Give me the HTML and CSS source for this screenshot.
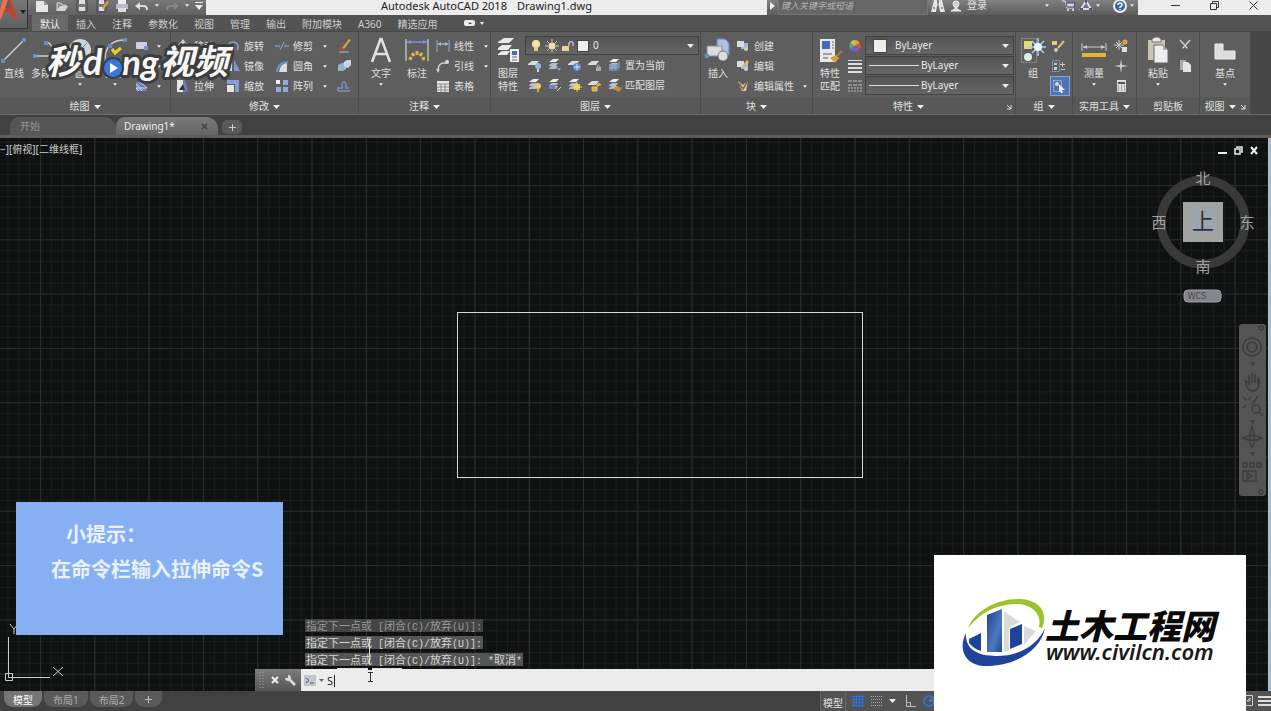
FILE: index.html
```html
<!DOCTYPE html>
<html lang="zh-CN">
<head>
    <meta charset="UTF-8">
    <meta name="viewport" content="width=device-width, initial-scale=1.0">
    <title>Autodesk AutoCAD 2018 Drawing1.dwg</title>
    <link rel="stylesheet" href="styles.css">
</head>
<body>
    <!-- Shared icons -->
    <svg class="sprite" aria-hidden="true">
        <symbol id="down" viewBox="0 0 7 4"><path d="M0 0h7L3.5 4z" fill="#eee"/></symbol>
        <symbol id="corner" viewBox="0 0 6 6"><path d="M1 1l4 4M5 1v4H1" fill="none" stroke="#ddd"/></symbol>
        <symbol id="layers" viewBox="0 0 14 14">
            <path d="M1 4l4-3h6L8 4z" fill="#eee"/><path d="M1 7l3-2h6L8 8H1zM1 10l3-2h6l-2 3H1z" fill="#b8bec8"/>
        </symbol>
        <symbol id="layer" viewBox="0 0 14 14"><path d="M0 6l4-3h7L8 7H0z" fill="#dcdcdc"/></symbol>
        <symbol id="block" viewBox="0 0 14 14">
            <path d="M5 4h7v6H5z" fill="#a9b8d6"/><path d="M1 2h7v6H1z" fill="#d9dbe0"/><circle cx="10" cy="10" r="2" fill="#ccd"/>
        </symbol>
    </svg>

    <header class="top">
        <button class="app-button" aria-label="应用程序菜单">
            <svg width="28" height="29" viewBox="0 0 28 29">
                <path d="M-4 21L5 -5h4l9 24-5-1-3-6H4l-3 7z" fill="#c5432c"/>
                <path d="M5 8L8 0l3 8z" fill="#5b5b5b"/>
                <path d="M-4 21L5 -5l3 5L1 19z" fill="#e8745a"/>
                <path d="M20 10h6l-3 4z" fill="#222"/>
            </svg>
        </button>
        <div class="top-rows">
            <div class="title-bar">
                <div class="quick-access">
                    <button aria-label="新建"><svg width="14" height="14" viewBox="0 0 14 14"><path d="M1 2h8l4 4v7H1z" fill="#e6e6e6"/><path d="M9 2v4h4z" fill="#999"/></svg></button>
                    <button aria-label="打开"><svg width="14" height="14" viewBox="0 0 14 14"><path d="M2 12V4h4l1 2h4v2H5z" fill="#8a8a8a" stroke="#ddd"/><path d="M2 12l3-5h8l-3 5z" fill="#d5d5d5"/></svg></button>
                    <button aria-label="保存"><svg width="14" height="14" viewBox="0 0 14 14"><path d="M2 1h10v12H2z" fill="#777" stroke="#445"/><path d="M4 1h6v4H4zM4 8h6v4H4z" fill="#ddd"/></svg></button>
                    <button aria-label="另存为"><svg width="14" height="14" viewBox="0 0 14 14"><path d="M2 1h9v12H2z" fill="#777" stroke="#445"/><path d="M4 1h5v4H4zM4 8h5v4H4z" fill="#ddd"/><path d="M7 9l5-7 2 1-5 7z" fill="#d9a441"/></svg></button>
                    <button aria-label="打印"><svg width="14" height="14" viewBox="0 0 14 14"><path d="M3 1h8v5H3z" fill="#eee"/><path d="M1 5h12v5H1z" fill="#b5bccb"/><path d="M3 9h8v4H3z" fill="#ddd"/></svg></button>
                    <button aria-label="放弃"><svg width="14" height="14" viewBox="0 0 14 14"><path d="M2 7h7q3 0 3 4" fill="none" stroke="#ddd" stroke-width="2"/><path d="M0 7l5-4v8z" fill="#ddd"/></svg></button>
                    <svg class="tiny"><use href="#down"/></svg>
                    <button aria-label="重做"><svg width="14" height="14" viewBox="0 0 14 14"><path d="M12 7H5q-3 0-3 4" fill="none" stroke="#888" stroke-width="2"/><path d="M14 7L9 3v8z" fill="#888"/></svg></button>
                    <svg class="tiny"><use href="#down"/></svg>
                    <button aria-label="自定义快速访问工具栏"><svg width="8" height="8" viewBox="0 0 8 8"><path d="M0 0h8v1H0zM0 3h8L4 8z" fill="#eee"/></svg></button>
                </div>
                <h1 class="title"><span>Autodesk AutoCAD 2018</span><span>Drawing1.dwg</span></h1>
                <div class="info-center">
                    <svg width="6" height="8" viewBox="0 0 6 8"><path d="M1 0v8l5-4z" fill="#eee"/></svg>
                    <input class="search" type="text" placeholder="键入关键字或短语" aria-label="搜索">
                    <button aria-label="查找"><svg width="14" height="14" viewBox="0 0 14 14"><path d="M3 1h3v6l-1 6H0l2-8zM8 1h3l1 4 2 8H9L8 7z" fill="#e5e5e5"/><path d="M6 4h2v3H6z" fill="#aaa"/><path d="M2 9h2M10 9h2" stroke="#555"/></svg></button>
                    <button class="login"><svg width="12" height="12" viewBox="0 0 12 12"><circle cx="6" cy="4" r="3" fill="#ccc" stroke="#eee"/><path d="M5 7v2l-4 2h10L7 9V7z" fill="#ddd" stroke="#eee"/></svg>登录</button>
                    <svg class="tiny login-arrow"><use href="#down"/></svg>
                    <button aria-label="购物车"><svg width="14" height="14" viewBox="0 0 14 14"><path d="M0 2h3l2 7h7" fill="none" stroke="#eee"/><path d="M4 4h9l-1 4H5z" fill="#cfd4e8" stroke="#447"/><circle cx="6" cy="11" r="1" fill="#eee"/><circle cx="11" cy="11" r="1" fill="#eee"/></svg></button>
                    <button aria-label="A360"><svg width="14" height="14" viewBox="0 0 14 14"><path d="M7 2l5 8H2z" fill="none" stroke="#dde" stroke-width="2"/><path d="M1 10h3M10 10h3M7 1v3" stroke="#557" stroke-width="2"/></svg></button>
                    <svg class="tiny"><use href="#down"/></svg>
                    <button class="help" aria-label="帮助"><svg width="14" height="14" viewBox="0 0 14 14"><circle cx="7" cy="7" r="6" fill="#3d5da8" stroke="#eee" stroke-width="2"/><path d="M5 6q0-2 2-2t2 2q0 1-2 2v1M7 10v1" fill="none" stroke="#fff" stroke-width="1.5"/></svg></button>
                    <svg class="tiny"><use href="#down"/></svg>
                </div>
                <div class="window-buttons">
                    <button aria-label="最小化"><svg width="9" height="9" viewBox="0 0 9 9"><path d="M0 4.500h9" stroke="#333"/></svg></button>
                    <button aria-label="还原"><svg width="9" height="9" viewBox="0 0 9 9"><path d="M.5 2.500h6v6h-6zM2.500 2V.5h6v6H7" fill="none" stroke="#333"/></svg></button>
                    <button aria-label="关闭"><svg width="9" height="9" viewBox="0 0 9 9"><path d="M.5 .5l8 8M8.500 .5l-8 8" stroke="#333"/></svg></button>
                </div>
            </div>
            <nav class="ribbon-tabs">
                <a class="active" href="#">默认</a>
                <a href="#">插入</a>
                <a href="#">注释</a>
                <a href="#">参数化</a>
                <a href="#">视图</a>
                <a href="#">管理</a>
                <a href="#">输出</a>
                <a href="#">附加模块</a>
                <a href="#">A360</a>
                <a href="#">精选应用</a>
                <button class="ribbon-toggle" aria-label="最小化功能区"><svg width="20" height="7" viewBox="0 0 20 7"><rect width="11" height="6" rx="2" fill="#eee"/><path d="M4 4l2-2 2 2z" fill="#555"/><path d="M16 2h4l-2 3z" fill="#eee"/></svg></button>
            </nav>
        </div>
    </header>

    <div class="ribbon">
        <section class="panel draw">
            <div class="panel-body">
                <button class="big w28"><svg width="26" height="28" viewBox="0 0 26 28"><path d="M2 25L23 4" stroke="#ccc" stroke-width="1.500"/><path d="M0 23h4v4H0zM21 2h4v4h-4z" fill="#7089c4"/></svg>直线</button>
                <button class="big w36"><svg width="26" height="28" viewBox="0 0 26 28"><path d="M2 20h14q8-4 0-13H12" fill="none" stroke="#ccc" stroke-width="1.500"/><path d="M0 18h4v4H0zM11 5h4v4h-4z" fill="#7089c4"/></svg>多段线</button>
                <button class="big w32"><svg width="26" height="28" viewBox="0 0 26 28"><circle cx="13" cy="14" r="11" fill="#d4d4d4"/><path d="M13 14l7-7" stroke="#6580bd"/></svg>圆<svg class="tiny"><use href="#down"/></svg></button>
                <button class="big w38"><svg width="26" height="28" viewBox="0 0 26 28"><path d="M3 24Q3 4 23 4" fill="none" stroke="#ccc" stroke-width="1.500"/><path d="M21 2h4v4h-4zM6 8h4v4H6zM1 22h4v4H1z" fill="#7089c4"/></svg>圆弧<svg class="tiny"><use href="#down"/></svg></button>
                <div class="stack w28">
                    <button class="tool" aria-label="矩形"><svg width="14" height="14" viewBox="0 0 14 14"><rect x="1" y="3" width="11" height="7" rx="1" fill="#cfd2da"/><path d="M9 7h4v4H9z" fill="#7d94c8"/></svg><svg class="tiny push"><use href="#down"/></svg></button>
                    <button class="tool" aria-label="椭圆"><svg width="14" height="14" viewBox="0 0 14 14"><ellipse cx="7" cy="7" rx="6" ry="4" fill="#cfd2da"/></svg><svg class="tiny push"><use href="#down"/></svg></button>
                    <button class="tool" aria-label="图案填充"><svg width="14" height="14" viewBox="0 0 14 14"><path d="M1 3h4l7 9H1z" fill="#6f8bc5"/><path d="M1 5l6 7M1 9l3 3M5 3l7 6H1" stroke="#cdd6ee" fill="none"/></svg><svg class="tiny push"><use href="#down"/></svg></button>
                </div>
            </div>
            <h2>绘图 <svg class="arrow"><use href="#down"/></svg></h2>
        </section>

        <section class="panel modify">
            <div class="panel-body">
                <div class="stack w50">
                    <button class="tool"><svg width="14" height="14" viewBox="0 0 14 14"><path d="M7 0l3 4H8v2h2V4l4 3-4 3V8H8v2h2l-3 4-3-4h2V8H4v2L0 7l4-3v2h2V4H4z" fill="#ccc"/></svg>移动</button>
                    <button class="tool"><svg width="14" height="14" viewBox="0 0 14 14"><circle cx="5" cy="5" r="3.500" fill="none" stroke="#8fa6d8" stroke-width="2"/><circle cx="9" cy="9" r="3.500" fill="none" stroke="#ddd" stroke-width="2"/></svg>复制</button>
                    <button class="tool"><svg width="14" height="14" viewBox="0 0 14 14"><path d="M1 1h8l3 12H1z" fill="#6480bb"/><path d="M1 1h6v12H1z" fill="#e5e5e5"/><path d="M3 11l4-6 2 6z" fill="#333"/></svg>拉伸</button>
                </div>
                <div class="stack w49">
                    <button class="tool"><svg width="14" height="14" viewBox="0 0 14 14"><path d="M3 11A5 5 0 1 1 11 11" fill="none" stroke="#8294bb" stroke-width="2"/><path d="M0 9h6v5z" fill="#8294bb"/></svg>旋转</button>
                    <button class="tool"><svg width="14" height="14" viewBox="0 0 14 14"><path d="M6 1v11H0z" fill="#ddd"/><path d="M8 1v11h6z" fill="#7f97ce"/></svg>镜像</button>
                    <button class="tool"><svg width="14" height="14" viewBox="0 0 14 14"><path d="M1 1h12v12H9V5H1z" fill="#879fd6"/><path d="M1 6h7v7H1z" fill="#e5e5e5"/></svg>缩放</button>
                </div>
                <div class="stack w62">
                    <button class="tool"><svg width="14" height="14" viewBox="0 0 14 14"><path d="M0 7h5M9 7h5" stroke="#8097cf" stroke-width="1.500"/><path d="M5 11l4-8" stroke="#aaa"/></svg>修剪<svg class="tiny push"><use href="#down"/></svg></button>
                    <button class="tool"><svg width="14" height="14" viewBox="0 0 14 14"><path d="M1 13Q2 2 13 2v2Q5 5 3 13z" fill="#7089c4"/><path d="M4 13Q5 5 12 4v9z" fill="#ddd"/></svg>圆角<svg class="tiny push"><use href="#down"/></svg></button>
                    <button class="tool"><svg width="14" height="14" viewBox="0 0 14 14"><path d="M1 1h4v4H1z" fill="#eee"/><path d="M8 1h5v5H8zM1 8h5v5H1zM8 8h5v5H8z" fill="#93a8d8"/></svg>阵列<svg class="tiny push"><use href="#down"/></svg></button>
                </div>
                <div class="stack">
                    <button class="tool" aria-label="删除"><svg width="14" height="14" viewBox="0 0 14 14"><path d="M5 9l7-9 2 1-7 9z" fill="#d7a347"/><path d="M1 10l3-2 4 3-3 1z" fill="#b5472f"/><path d="M2 13h10" stroke="#bbb"/></svg></button>
                    <button class="tool" aria-label="分解"><svg width="14" height="14" viewBox="0 0 14 14"><path d="M1 6l4-2h4v6l-3 2H1z" fill="#9eb0cf"/><path d="M7 3l3-2h4v5l-3 3-4-1z" fill="#cbd5e8"/></svg></button>
                    <button class="tool" aria-label="偏移"><svg width="14" height="14" viewBox="0 0 14 14"><path d="M1 12h12M3 9h2V5q2-4 4 0v4h3M1 12V9h2" fill="none" stroke="#7e92c2" stroke-width="1.500"/></svg></button>
                </div>
            </div>
            <h2>修改 <svg class="arrow"><use href="#down"/></svg></h2>
        </section>

        <section class="panel annotate">
            <div class="panel-body">
                <button class="big w36"><svg width="26" height="28" viewBox="0 0 26 28"><path d="M4 26L12.500 3h1L22 26M7 18h12" fill="none" stroke="#e2e2e2" stroke-width="2.500"/></svg>文字<svg class="tiny"><use href="#down"/></svg></button>
                <button class="big w36"><svg width="26" height="28" viewBox="0 0 26 28"><path d="M2 3v22M24 3v22" stroke="#bbb" stroke-width="1.500"/><path d="M3 6h20" stroke="#7c93cc" stroke-width="1.500"/><path d="M3 6l4-2v4zM23 6l-4-2v4z" fill="#7c93cc"/><path d="M13 15v4M8 17l2 3M18 17l-2 3M5 22l3 1M21 22l-3 1" stroke="#dfb54b" stroke-width="3"/></svg>标注</button>
                <div class="stack w54">
                    <button class="tool"><svg width="14" height="14" viewBox="0 0 14 14"><path d="M1 1v12M13 1v12" stroke="#93a7d8"/><path d="M2 5h10" stroke="#ccc"/><path d="M2 5l3-2v4zM12 5L9 3v4z" fill="#aab9df"/></svg>线性<svg class="tiny push"><use href="#down"/></svg></button>
                    <button class="tool"><svg width="14" height="14" viewBox="0 0 14 14"><path d="M2 12Q2 4 8 4h2" fill="none" stroke="#ccc" stroke-width="1.500"/><circle cx="11" cy="3" r="2" fill="#ddd"/><path d="M0 10h4l-2 4z" fill="#ccc"/></svg>引线<svg class="tiny push"><use href="#down"/></svg></button>
                    <button class="tool"><svg width="14" height="14" viewBox="0 0 14 14"><path d="M1 2h12v11H1z" fill="#e7e7e7"/><path d="M1 5h12M1 8h12M1 11h12M5 5v8M9 5v8" stroke="#888"/></svg>表格</button>
                </div>
            </div>
            <h2>注释 <svg class="arrow"><use href="#down"/></svg></h2>
        </section>

        <section class="panel layer">
            <div class="panel-body">
                <button class="big w34"><svg width="26" height="28" viewBox="0 0 26 28"><path d="M3 6l6-4h10l-5 5H3zM3 12l4-3h10l-4 5H3zM3 18l4-3h8l-3 4H3z" fill="#e8e8e8"/><path d="M15 13h9v13h-9z" fill="#eee"/><path d="M17 15h5v4h-5z" fill="#4b6dab"/><path d="M17 21h5M17 24h5" stroke="#668"/></svg><span>图层<br>特性</span></button>
                <div class="layer-tools">
                    <label class="combo">
                        <svg width="14" height="14" viewBox="0 0 14 14"><circle cx="7" cy="5" r="4" fill="#f4e6a0"/><path d="M5 8h4v4H5z" fill="#dacb85"/></svg>
                        <svg width="14" height="14" viewBox="0 0 14 14"><circle cx="7" cy="7" r="3.500" fill="#ecdcae"/><path d="M7 0v3M7 11v3M0 7h3M11 7h3M2 2l2 2M10 10l2 2M12 2l-2 2M2 12l2-2" stroke="#d4c69f"/></svg>
                        <svg width="14" height="14" viewBox="0 0 14 14"><path d="M1 7h7v5H1z" fill="#e9d391"/><path d="M8 7V4q2-3 4 0v3" fill="none" stroke="#bbb" stroke-width="1.500"/></svg>
                        <span class="swatch"></span>
                        <select aria-label="图层"><option>0</option></select>
                        <svg class="arrow"><use href="#down"/></svg>
                    </label>
                    <div class="icon-row">
                        <button class="tool" aria-label="关"><svg width="14" height="14" viewBox="0 0 14 14"><use href="#layer"/><circle cx="10" cy="8" r="3" fill="#9db4e8"/><path d="M9 11h2v3H9z" fill="#ccd"/></svg></button>
                        <button class="tool" aria-label="隔离"><svg width="14" height="14" viewBox="0 0 14 14"><use href="#layers"/><path d="M9 10l4 0-2 3z" fill="#8ba3d5"/></svg></button>
                        <button class="tool" aria-label="冻结"><svg width="14" height="14" viewBox="0 0 14 14"><use href="#layer"/><circle cx="9" cy="9" r="4" fill="#6989ce"/><path d="M9 6v6M6 9h6" stroke="#dce6ff"/></svg></button>
                        <button class="tool" aria-label="锁定"><svg width="14" height="14" viewBox="0 0 14 14"><use href="#layer"/><path d="M8 9h5v4H8z" fill="#aaa"/><path d="M9 9q1-4 3 0" fill="none" stroke="#bbb"/></svg></button>
                        <button class="tool"><svg width="14" height="14" viewBox="0 0 14 14"><use href="#layers"/><path d="M1 6h8l3-3v7l-3 3H1z" fill="#7d99cc" opacity=".7"/></svg>置为当前</button>
                    </div>
                    <div class="icon-row">
                        <button class="tool" aria-label="打开所有图层"><svg width="14" height="14" viewBox="0 0 14 14"><use href="#layers"/><circle cx="10" cy="8" r="3" fill="#edcb5e"/><path d="M9 11h2v3H9z" fill="#c9a84a"/></svg></button>
                        <button class="tool" aria-label="取消隔离"><svg width="14" height="14" viewBox="0 0 14 14"><use href="#layers"/><path d="M1 7h7l-1 4H1z" fill="#6c88c2"/><path d="M9 13l4-4" stroke="#ddd"/></svg></button>
                        <button class="tool" aria-label="解冻"><svg width="14" height="14" viewBox="0 0 14 14"><use href="#layers"/><circle cx="9" cy="9" r="3" fill="#f0df68"/><path d="M9 4v10M4 9h10M6 6l6 6M12 6l-6 6" stroke="#e8d550"/></svg></button>
                        <button class="tool" aria-label="解锁"><svg width="14" height="14" viewBox="0 0 14 14"><use href="#layer"/><path d="M4 9h5v4H4zM9 9V7q2-3 4 0" fill="#d9b33d" stroke="#e3c155"/></svg></button>
                        <button class="tool"><svg width="14" height="14" viewBox="0 0 14 14"><use href="#layers"/><path d="M5 11l4-3 5 2-3 4z" fill="#c48b40"/></svg>匹配图层</button>
                    </div>
                </div>
            </div>
            <h2>图层 <svg class="arrow"><use href="#down"/></svg></h2>
        </section>

        <section class="panel blocks">
            <div class="panel-body">
                <button class="big w34"><svg width="26" height="28" viewBox="0 0 26 28"><path d="M12 3h8l4 4v12H12z" fill="#aebfe3" stroke="#6c85bb"/><path d="M2 10h15v10H2z" fill="#dadce0" stroke="#888"/><circle cx="18" cy="20" r="5" fill="#ddd" stroke="#777"/><path d="M0 18h4v4H0z" fill="#6c8dcc"/></svg>插入</button>
                <div class="stack w73">
                    <button class="tool"><svg width="14" height="14" viewBox="0 0 14 14"><use href="#block"/></svg>创建</button>
                    <button class="tool"><svg width="14" height="14" viewBox="0 0 14 14"><use href="#block"/><path d="M6 7l5-6 2 2-5 5z" fill="#e2b850"/></svg>编辑</button>
                    <button class="tool"><svg width="14" height="14" viewBox="0 0 14 14"><path d="M2 2l5 4 5-4-2 10H6z" fill="#d1cfc8"/><path d="M3 4l4 6 5-8" fill="none" stroke="#8b6b30" stroke-width="1.500"/></svg>编辑属性<svg class="tiny push"><use href="#down"/></svg></button>
                </div>
            </div>
            <h2>块 <svg class="arrow"><use href="#down"/></svg></h2>
        </section>

        <section class="panel props">
            <div class="panel-body">
                <button class="big w34"><svg width="26" height="28" viewBox="0 0 26 28"><path d="M3 3h15v23H3z" fill="#e8e8ea"/><path d="M5 5h8v8H5z" fill="#4569b4"/><path d="M15 6h2M15 9h2M15 12h2" stroke="#668"/><path d="M6 18h9M6 22h5" stroke="#557"/><path d="M25 15l-5 5" stroke="#a97b3d" stroke-width="2"/><path d="M13 22l6-3 3 3-4 5z" fill="#d9a13b"/></svg><span>特性<br>匹配</span></button>
                <div class="stack w16">
                    <button class="tool" aria-label="对象颜色"><svg width="14" height="14" viewBox="0 0 14 14"><path d="M7 7V1a6 6 0 0 1 5 3z" fill="#e7a03d"/><path d="M7 7l5-3a6 6 0 0 1 0 6z" fill="#d9503f"/><path d="M7 7l5 3a6 6 0 0 1-5 3z" fill="#b04ba5"/><path d="M7 7v6a6 6 0 0 1-5-3z" fill="#4b6fd0"/><path d="M7 7l-5 3a6 6 0 0 1 0-6z" fill="#49a9a0"/><path d="M7 7L2 4a6 6 0 0 1 5-3z" fill="#b6cf4d"/></svg></button>
                    <button class="tool" aria-label="线宽"><svg width="14" height="14" viewBox="0 0 14 14"><path d="M0 1h14v1H0zM0 4h14v2H0zM0 8h14v2H0zM0 12h14v2H0z" fill="#ddd"/></svg></button>
                    <button class="tool" aria-label="线型"><svg width="14" height="14" viewBox="0 0 14 14"><path d="M0 2h14M0 6h14" stroke="#bbb" stroke-dasharray="4 1"/><path d="M0 9h14M0 12h14" stroke="#bbb" stroke-dasharray="2 1"/></svg></button>
                </div>
                <div class="prop-combos">
                    <label class="combo"><span class="swatch"></span><select aria-label="颜色"><option>ByLayer</option></select><svg class="arrow"><use href="#down"/></svg></label>
                    <label class="combo"><span class="line"></span><select aria-label="线宽设置"><option>ByLayer</option></select><svg class="arrow"><use href="#down"/></svg></label>
                    <label class="combo"><span class="line"></span><select aria-label="线型设置"><option>ByLayer</option></select><svg class="arrow"><use href="#down"/></svg></label>
                </div>
            </div>
            <h2>特性 <svg class="arrow"><use href="#down"/></svg><svg class="launcher"><use href="#corner"/></svg></h2>
        </section>

        <section class="panel group">
            <div class="panel-body">
                <button class="big w34"><svg width="26" height="28" viewBox="0 0 26 28"><path d="M1.500 2.500h15v24h-15z" fill="none" stroke="#999" stroke-dasharray="2 1"/><path d="M4 5h8v8H4z" fill="#e6d878"/><circle cx="8" cy="21" r="4" fill="#ddeaf0"/><path d="M18 2v18M9 11h17M12 5l12 12M24 5L12 17" stroke="#a6cdf3" stroke-width="1.500"/><circle cx="18" cy="11" r="4" fill="#e5f4ff"/></svg>组</button>
                <div class="stack w20">
                    <button class="tool" aria-label="解除编组"><svg width="14" height="14" viewBox="0 0 14 14"><path d="M1 2h5v4H1z" fill="#d9ce7d"/><circle cx="5" cy="11" r="2" fill="#ccc"/><path d="M7 9l6-7" stroke="#d8c460" stroke-width="2"/></svg></button>
                    <button class="tool" aria-label="组编辑"><svg width="14" height="14" viewBox="0 0 14 14"><path d="M1.500 1.500h7v11h-7z" fill="none" stroke="#8ea4d5" stroke-dasharray="2 1"/><path d="M3 4h3v2H3zM3 8h3v3H3zM11 3h1v5h-1zM9 5h5v1H9zM10 10h4v1h-4z" fill="#ccc"/></svg></button>
                    <button class="tool selected" aria-label="启用组选择"><svg width="14" height="14" viewBox="0 0 14 14"><path d="M1.500 1.500h8v11h-8z" fill="none" stroke="#a9c0ef" stroke-dasharray="2 1"/><circle cx="5" cy="5" r="2" fill="#e5df9f"/><path d="M7 5l6 6-3 0 1 3-2 0-1-2-1 1z" fill="#eee"/></svg></button>
                </div>
            </div>
            <h2>组 <svg class="arrow"><use href="#down"/></svg></h2>
        </section>

        <section class="panel utils">
            <div class="panel-body">
                <button class="big w38"><svg width="26" height="28" viewBox="0 0 26 28"><path d="M1 7v8M25 7v8M2 11h22" stroke="#ccc"/><path d="M2 11l4-2v4zM24 11l-4-2v4z" fill="#ccc"/><path d="M1 17h24v4H1z" fill="#e6b52c"/></svg>测量<svg class="tiny"><use href="#down"/></svg></button>
                <div class="stack">
                    <button class="tool" aria-label="快速选择"><svg width="14" height="14" viewBox="0 0 14 14"><path d="M5 1v10M0 6h10M2 3l6 6M8 3L2 9" stroke="#ccc"/><circle cx="11" cy="3" r="2.500" fill="#e4a43b"/><path d="M8 8h5v5H8z" fill="#ddd"/></svg></button>
                    <button class="tool" aria-label="点坐标"><svg width="14" height="14" viewBox="0 0 14 14"><path d="M7 0l1 6 6 1-6 1-1 6-1-6-6-1 6-1z" fill="#ccc"/></svg></button>
                    <button class="tool" aria-label="计算器"><svg width="14" height="14" viewBox="0 0 14 14"><path d="M3 1h9v12H3z" fill="#ddd"/><path d="M4 3h7v2H4z" fill="#555"/><path d="M4 7h7M4 9h7M4 11h7" stroke="#666" stroke-dasharray="1 2"/></svg></button>
                </div>
            </div>
            <h2>实用工具 <svg class="arrow"><use href="#down"/></svg></h2>
        </section>

        <section class="panel clip">
            <div class="panel-body">
                <button class="big w38"><svg width="26" height="28" viewBox="0 0 26 28"><path d="M3 4h17v20H3z" fill="#cbc4b5"/><path d="M7 3q5-4 9 0v3H7z" fill="#e7e7e7" stroke="#777"/><path d="M9 9h9l5 5v13H9z" fill="#eee" stroke="#666"/><path d="M18 9v5h5z" fill="#aaa"/></svg>粘贴<svg class="tiny"><use href="#down"/></svg></button>
                <div class="stack">
                    <button class="tool" aria-label="剪切"><svg width="14" height="14" viewBox="0 0 14 14"><path d="M2 1l8 9M12 1l-8 9" stroke="#ccc" stroke-width="1.500"/><circle cx="3" cy="11" r="2" fill="none" stroke="#555"/><circle cx="11" cy="11" r="2" fill="none" stroke="#555"/></svg></button>
                    <button class="tool" aria-label="复制剪裁"><svg width="14" height="14" viewBox="0 0 14 14"><path d="M2 1h6v10H2z" fill="#aaa"/><path d="M5 3h5l3 3v7H5z" fill="#e4e4e4"/></svg></button>
                </div>
            </div>
            <h2>剪贴板</h2>
        </section>

        <section class="panel view">
            <div class="panel-body">
                <button class="big w46"><svg width="26" height="28" viewBox="0 0 26 28"><path d="M3 8h8v7h12v8H3z" fill="#ddd" stroke="#eee"/></svg>基点<svg class="tiny"><use href="#down"/></svg></button>
            </div>
            <h2>视图 <svg class="arrow"><use href="#down"/></svg><svg class="launcher"><use href="#corner"/></svg></h2>
        </section>

        <svg class="video-logo" width="195" height="56" viewBox="0 0 195 56" role="img" aria-label="秒dong视频">
            <g class="video-text">
                <text x="7" y="37" font-size="34">秒</text>
                <text class="latin" x="44" y="38" font-size="36">d</text>
                <text class="latin" x="83" y="38" font-size="35">ng</text>
                <text x="121" y="37" font-size="34">视频</text>
            </g>
            <circle cx="74" cy="31" r="11" fill="#3d3d3d"/>
            <circle cx="74" cy="31" r="9" fill="#3978dc"/>
            <path d="M71 26v10l8-5z" fill="#fff"/>
            <path d="M73 12l3 4 6-5" fill="none" stroke="#e8cd32" stroke-width="3"/>
        </svg>
    </div>

    <nav class="file-tabs">
        <a class="file-tab" href="#">开始</a>
        <a class="file-tab current" href="#">Drawing1*<svg width="7" height="7" viewBox="0 0 7 7"><path d="M1 1l5 5M6 1L1 6" stroke="#444" stroke-width="1.500"/></svg></a>
        <button class="new-tab" aria-label="新图形"><svg width="7" height="7" viewBox="0 0 7 7"><path d="M3 0h1v3h3v1H4v3H3V4H0V3h3z" fill="#ccc"/></svg></button>
    </nav>

    <main class="canvas">
        <svg class="drawing" width="100%" height="100%">
            <defs>
                <pattern id="minor" x="40" y="47" width="10.860" height="10.860" patternUnits="userSpaceOnUse">
                    <path d="M.5 0v10.860M0 .5h10.860" stroke="#1b1d1d"/>
                </pattern>
                <pattern id="major" x="40" y="47" width="54.300" height="54.300" patternUnits="userSpaceOnUse">
                    <path d="M.5 0v54.300M0 .5h54.300" stroke="#292d2d"/>
                </pattern>
            </defs>
            <rect width="100%" height="100%" fill="url(#minor)"/>
            <rect width="100%" height="100%" fill="url(#major)"/>
            <rect x="457.500" y="174.500" width="405" height="165" fill="none" stroke="#d8d8d8"/>
            <!-- UCS icon -->
            <path d="M8.500 499v40.500H50M5.500 535.500h7v7h-7zM53 529l10 9M63 529l-10 9M10 486l4 5M18 486l-4 5v5" fill="none" stroke="#ccc"/>
        </svg>
        <div class="view-label">−][俯视][二维线框]</div>

        <div class="doc-buttons">
            <button aria-label="最小化图形"><svg width="9" height="9" viewBox="0 0 9 9"><path d="M0 6h9v2H0z" fill="#eee"/></svg></button>
            <button aria-label="还原图形"><svg width="9" height="9" viewBox="0 0 9 9"><path d="M1 3h5v5H1zM3 2V1h5v5H7" fill="none" stroke="#eee" stroke-width="1.500"/></svg></button>
            <button aria-label="关闭图形"><svg width="9" height="9" viewBox="0 0 9 9"><path d="M1 1l6 7M7 1L1 8" stroke="#eee" stroke-width="2"/></svg></button>
        </div>

        <svg class="view-cube" width="110" height="136" viewBox="0 0 110 136">
            <circle cx="55" cy="54" r="42" fill="none" stroke="#393939" stroke-width="9"/>
            <rect x="35" y="34" width="40" height="40" fill="#a2a4a2"/>
            <rect x="43" y="41" width="25" height="25" fill="#9ca5ae"/>
            <text x="55" y="61" font-size="22" fill="#2e3436">上</text>
            <g fill="#a2a2a2" font-size="15">
                <text x="55" y="16">北</text>
                <text x="55" y="104">南</text>
                <text x="11" y="60">西</text>
                <text x="99" y="60">东</text>
            </g>
            <rect x="36" y="122" width="37" height="12" rx="4" fill="#85868c" stroke="#a0a0a6"/>
            <text x="49" y="131" font-size="9" fill="#4b4b50">WCS</text>
        </svg>

        <div class="nav-bar">
            <svg width="27" height="172" viewBox="0 0 27 172" fill="none" stroke="#3c3c3c" stroke-width="1.500">
                <circle cx="22" cy="4" r="2"/>
                <circle cx="13" cy="23" r="9"/><circle cx="13" cy="23" r="5"/>
                <path d="M12 39h3l-1.500 2z"/>
                <path d="M7 57l3 3v-9M13 59V49M16 59V50M19 60v-7M6 56q2 12 9 11 6-2 5-12"/>
                <path d="M4 73l3 3M12 73l-3 3M4 84l3-3M19 72l-6 8"/><circle cx="17" cy="85" r="4"/><path d="M20 88l4 4"/>
                <path d="M12 97h3l-1.500 2z"/>
                <path d="M13 103l-2 6v11l2 3 2-3v-11zM4 114q9-5 19 0-9 5-19 0z"/>
                <path d="M12 129h3l-1.500 2z"/>
                <path d="M4 139h4v4H4zM11 139h4v4h-4zM18 139h4v4h-4zM4 147h13v10H4zM8 149v6l5-3z"/>
                <circle cx="22" cy="168" r="2"/>
            </svg>
        </div>

        <aside class="tip">
            <p class="tip-title">小提示：</p>
            <p>在命令栏输入拉伸命令S</p>
        </aside>

        <div class="command">
            <ul class="history">
                <li class="old">指定下一点或<span class="keys"> [</span>闭合<span class="keys">(C)/</span>放弃<span class="keys">(U)]:</span></li>
                <li>指定下一点或<span class="keys"> [</span>闭合<span class="keys">(C)/</span>放弃<span class="keys">(U)]:</span></li>
                <li>指定下一点或<span class="keys"> [</span>闭合<span class="keys">(C)/</span>放弃<span class="keys">(U)]: *</span>取消<span class="keys">*</span></li>
            </ul>
            <div class="command-line">
                <div class="command-tools">
                    <svg width="6" height="16" viewBox="0 0 6 16"><path d="M1 0v16M4 0v16" stroke="#aaa" stroke-dasharray="1 2"/></svg>
                    <button aria-label="关闭命令行"><svg width="8" height="8" viewBox="0 0 8 8"><path d="M1 1l6 6M7 1L1 7" stroke="#eee" stroke-width="2"/></svg></button>
                    <button aria-label="自定义"><svg width="12" height="12" viewBox="0 0 12 12"><path d="M5 5l6 6" stroke="#ddd" stroke-width="2.500"/><path d="M1 4a3 3 0 1 0 3-3v3z" fill="#ddd"/></svg></button>
                </div>
                <svg width="12" height="11" viewBox="0 0 12 11"><path d="M0 0h12v11H0z" fill="#c2c6d0"/><path d="M2 3l3 2.500L2 8M6 8h4" fill="none" stroke="#555"/></svg>
                <svg width="5" height="3" viewBox="0 0 5 3"><path d="M0 0h5L2.500 3z" fill="#666"/></svg>
                <div class="prompt">
                    <input class="command-input" type="text" value="S" aria-label="命令">
                    <span class="caret"></span>
                </div>
            </div>
        </div>

        <svg class="pointer" width="66" height="48" viewBox="0 0 66 48">
            <path d="M32.500 1v25M0 30.500h65" stroke="#ddd"/>
            <path d="M31 28h4v4h-4z" fill="#111"/>
            <path d="M31 34.500h5M31 43.500h5M33.500 35v8" stroke="#333"/>
        </svg>
    </main>

    <footer class="status-bar">
        <nav class="layout-tabs">
            <a class="current" href="#">模型</a>
            <a href="#">布局1</a>
            <a href="#">布局2</a>
            <button aria-label="新建布局"><svg width="7" height="7" viewBox="0 0 7 7"><path d="M3 0h1v3h3v1H4v3H3V4H0V3h3z" fill="#bbb"/></svg></button>
        </nav>
        <div class="status-tools">
            <button class="space">模型</button>
            <button aria-label="栅格"><svg width="14" height="14" viewBox="0 0 14 14"><path d="M2.500 1v12M5.500 1v12M8.500 1v12M11.500 1v12M1 2.500h12M1 5.500h12M1 8.500h12M1 11.500h12" stroke="#2f6ee0"/></svg></button>
            <button aria-label="捕捉"><svg width="14" height="14" viewBox="0 0 14 14"><path d="M1 2.500h12M1 5.500h12M1 8.500h12M1 11.500h12" stroke="#aaa" stroke-dasharray="1 1"/></svg></button>
            <svg class="arrow"><use href="#down"/></svg>
            <button class="ortho" aria-label="正交"><svg width="14" height="14" viewBox="0 0 14 14"><path d="M3.500 1v11.500H13M4 8.500h3.500v4" fill="none" stroke="#bbb"/></svg></button>
            <button aria-label="极轴追踪"><svg width="14" height="14" viewBox="0 0 14 14"><circle cx="7" cy="7" r="5" fill="none" stroke="#2f6ee0" stroke-width="2"/><path d="M7 7l4-3M7 7h5" stroke="#4e8cf5"/></svg></button>
            <button class="end" aria-label="全屏显示"><svg width="10" height="12" viewBox="0 0 10 12"><path d="M.5 .5h9v10h-9zM4 6l3-3v3z" fill="none" stroke="#ccc"/></svg></button>
            <button aria-label="自定义状态栏"><svg width="13" height="12" viewBox="0 0 13 12"><path d="M0 1h13v2H0zM0 5h13v2H0zM0 9h13v2H0z" fill="#ddd"/></svg></button>
        </div>
    </footer>

    <div class="site-logo">
        <svg width="312" height="156" viewBox="0 0 312 156" role="img" aria-label="土木工程网">
            <defs>
                <linearGradient id="tower" x1="0" y1="0" x2="1" y2="1"><stop offset="0" stop-color="#1e3f8e"/><stop offset=".6" stop-color="#4a7abd"/><stop offset="1" stop-color="#214795"/></linearGradient>
            </defs>
            <path d="M34 73C41 56 62 44 84 44C105 44 115 57 108 73L105 72C108 59 98 49 82 49C62 49 46 58 34 73Z" fill="#9cc22d"/>
            <path d="M32 78C23 96 33 111 52 111C82 111 107 95 111 73C104 89 87 101 62 101C43 101 31 94 32 78Z" fill="#1f429a"/>
            <path d="M70 56l16 11-11 6v22l-5 2zM90 71l12 5-12 14z" fill="#dadada"/>
            <path d="M53 60l15-6v43H53z" fill="url(#tower)"/>
            <path d="M35 84l12-6v18q-7-2-12-8zM76 74l12-5v20l-12 5z" fill="#1f429a"/>
            <text class="site-name" x="111" y="84" font-size="34">土木工程网</text>
            <text class="site-url" x="112" y="105" font-size="22">www.civilcn.com</text>
        </svg>
    </div>
</body>
</html>
```
FILE: styles.css
```css
* {
    box-sizing: border-box;
}

body {
    margin: 0;
    height: 100vh;
    display: flex;
    flex-direction: column;
    overflow: hidden;
    position: relative;
    font-family: "Noto Sans", "Noto Sans CJK SC", sans-serif;
    font-size: 10px;
    line-height: 13px;
    color: #e0e0e0;
    background-color: #404040;
}

button {
    display: flex;
    align-items: center;
    margin: 0;
    padding: 0;
    border: 0;
    background: none;
    color: inherit;
    font: inherit;
    white-space: nowrap;
}

a {
    color: inherit;
    text-decoration: none;
}

svg {
    flex: none;
}

.sprite {
    position: absolute;
    width: 0;
    height: 0;
}

.arrow {
    width: 7px;
    height: 4px;
}

.tiny {
    width: 4px;
    height: 3px;
}

.push {
    margin-left: auto;
}

/* Title bar */
.top {
    display: flex;
    background-color: #535353;
}

.app-button {
    width: 28px;
    height: 29px;
    overflow: hidden;
    background: linear-gradient(#777, #606060);
    border-right: 1px solid #333;
    border-bottom: 1px solid #333;
}

.top-rows {
    flex: 1;
}

.title-bar {
    display: flex;
    height: 15px;
    overflow: hidden;
    line-height: 11px;
}

.title-bar > * {
    display: flex;
    align-items: center;
    padding-bottom: 4px;
}

.quick-access {
    width: 178px;
    gap: 6px;
    padding-left: 7px;
    background: linear-gradient(#777, #606060);
}

.title {
    flex: 1;
    justify-content: center;
    gap: 10px;
    margin: 0;
    font-size: 11px;
    font-weight: normal;
    color: #222;
    background-color: #ececec;
}

.info-center {
    width: 371px;
    gap: 3px;
    padding-left: 2px;
    padding-right: 4px;
    background: linear-gradient(#808080, #5c5c5c);
}

.search {
    width: 150px;
    height: 18px;
    padding: 0 2px;
    border: 1px solid #777;
    background-color: #666;
    color: #ddd;
    font: italic 9px "Noto Sans", "Noto Sans CJK SC", sans-serif;
}

.search::placeholder {
    color: #b5b5b5;
}

.login {
    gap: 5px;
    margin-left: 2px;
    margin-right: auto;
}

.login-arrow {
    margin-right: 10px;
}

.help {
    margin-left: 10px;
}

.window-buttons {
    width: 133px;
    justify-content: space-between;
    padding-left: 33px;
    padding-right: 13px;
    background-color: #ececec;
}

.ribbon-tabs {
    display: flex;
    height: 16px;
    padding-left: 4px;
}

.ribbon-tabs a {
    padding: 3px 8px 0;
    color: #ccc;
}

.ribbon-tabs .active {
    background-color: #6a6a6a;
    color: #eee;
}

.ribbon-toggle {
    margin-left: 18px;
}

/* Ribbon panels */
.ribbon {
    display: flex;
    position: relative;
    height: 84px;
    background-color: #464646;
    border-top: 1px solid #484848;
    border-bottom: 1px solid #6c6c6c;
}

.panel {
    display: flex;
    flex-direction: column;
    flex: none;
    background-color: #5e5e5e;
    border-right: 1px solid #4b4b4b;
}

.panel-body {
    display: flex;
    flex: 1;
    padding-top: 4px;
}

.panel h2 {
    display: flex;
    align-items: center;
    justify-content: center;
    gap: 4px;
    height: 17px;
    margin: 0;
    padding-top: 2px;
    font-size: 10px;
    font-weight: normal;
    background-color: #585858;
}

.launcher {
    width: 6px;
    height: 6px;
}

.draw { width: 171px; }
.modify { width: 188px; }
.annotate { width: 132px; }
.layer { width: 210px; }
.blocks { width: 112px; }
.props { width: 203px; }
.group { width: 57px; }
.utils { width: 64px; }
.clip { width: 63px; }
.view { width: 51px; }

.modify .panel-body,
.annotate .panel-body {
    padding-left: 4px;
}

.utils .panel-body,
.clip .panel-body,
.view .panel-body {
    padding-left: 2px;
}

.props h2 {
    justify-content: flex-start;
    padding-left: 80px;
    padding-right: 3px;
}

.props .launcher {
    margin-left: auto;
}

.w16 { width: 16px; }
.w20 { width: 20px; }
.w28 { width: 28px; }
.w32 { width: 32px; }
.w34 { width: 34px; }
.w36 { width: 36px; }
.w38 { width: 38px; }
.w46 { width: 46px; }
.w49 { width: 49px; }
.w50 { width: 50px; }
.w54 { width: 54px; }
.w62 { width: 62px; }
.w73 { width: 73px; }

.big {
    flex: none;
    flex-direction: column;
    gap: 3px;
}

.stack {
    display: flex;
    flex-direction: column;
}

.tool {
    height: 20px;
    gap: 4px;
    padding: 0 1px;
}

.w62 .tool {
    padding-right: 9px;
}

.selected {
    background-color: #4d74b5;
    border: 1px solid #86a5dd;
}

.combo {
    display: flex;
    align-items: center;
    height: 19px;
    padding: 0 4px 0 3px;
    gap: 2px;
    background: linear-gradient(#545454, #666);
    border: 1px solid #414141;
}

.combo select {
    flex: 1;
    min-width: 0;
    padding: 0;
    border: 0;
    appearance: none;
    background: none;
    color: #e8e8e8;
    font: inherit;
}

.swatch {
    width: 12px;
    height: 12px;
    background-color: #eee;
    border: 1px solid #444;
}

.layer-tools {
    width: 174px;
}

.layer-tools .swatch {
    margin-right: 2px;
}

.icon-row {
    display: flex;
    gap: 4px;
    padding-left: 2px;
}

.icon-row .tool {
    gap: 3px;
}

.prop-combos {
    display: flex;
    flex-direction: column;
    gap: 1px;
    width: 149px;
    margin-left: 2px;
}

.prop-combos .swatch {
    margin: 0 6px 0 4px;
    width: 14px;
    height: 14px;
}

.line {
    width: 50px;
    height: 1px;
    background-color: #ddd;
}

.video-logo {
    position: absolute;
    left: 39px;
    top: 5px;
}

.video-text {
    fill: #f7f7f7;
    stroke: #3d3d3d;
    stroke-width: 6px;
    stroke-linejoin: round;
    paint-order: stroke;
    font-family: "Noto Sans CJK SC", sans-serif;
    font-weight: bold;
    font-style: italic;
}

.latin {
    font-family: Lato, sans-serif;
}

/* File tabs */
.file-tabs {
    display: flex;
    align-items: flex-end;
    height: 23px;
    padding-left: 10px;
    background-color: #414141;
    border-bottom: 3px solid #5c5c5c;
}

.file-tab {
    display: flex;
    align-items: center;
    justify-content: space-between;
    width: 106px;
    height: 18px;
    padding: 0 10px;
    border-radius: 9px 12px 0 0;
    background-color: #555;
    color: #999;
}

.file-tab.current {
    width: 102px;
    padding: 0 10px 0 8px;
    background: linear-gradient(#7a7a7a, #646464);
    color: #eee;
}

.new-tab {
    justify-content: center;
    width: 20px;
    height: 14px;
    margin: 0 0 1px 4px;
    border-radius: 5px;
    background-color: #5a5a5a;
}

/* Drawing area */
.canvas {
    flex: 1;
    position: relative;
    min-height: 0;
    background-color: #101111;
    border-right: 3px solid #a9b9d8;
}

.drawing {
    position: absolute;
    left: 0;
    top: 0;
}

.view-label {
    position: absolute;
    left: 0;
    top: 5px;
    color: #ccc;
}

.doc-buttons {
    position: absolute;
    right: 9px;
    top: 8px;
    display: flex;
    gap: 7px;
}

.view-cube {
    position: absolute;
    right: 10px;
    top: 30px;
    font-family: "Noto Sans CJK SC", sans-serif;
    text-anchor: middle;
}

.nav-bar {
    position: absolute;
    right: 2px;
    top: 186px;
    height: 172px;
    background-color: #545454;
    border-radius: 3px;
}

.tip {
    position: absolute;
    left: 16px;
    bottom: 56px;
    width: 267px;
    height: 133px;
    padding: 14px 0 0 35px;
    background-color: #86b0f1;
    color: #e9f1fd;
    font-family: "Noto Sans CJK SC", sans-serif;
    font-size: 20px;
    font-weight: bold;
    line-height: 35px;
    white-space: nowrap;
}

.tip p {
    margin: 0;
}

.tip .tip-title {
    padding-left: 15px;
}

.command {
    position: absolute;
    left: 255px;
    right: 60px;
    bottom: 0;
}

.history {
    display: flex;
    flex-direction: column;
    align-items: flex-start;
    gap: 4px;
    margin: 0 0 3px 50px;
    padding: 0;
    list-style: none;
    font-size: 11px;
}

.history li {
    height: 13px;
    padding: 0 1px;
    background-color: #555;
    color: #d5d5d5;
    white-space: pre;
}

.history .old {
    background-color: #444;
    color: #999;
}

.keys {
    font-family: "Liberation Mono", monospace;
    font-size: 10px;
}

.command-line {
    display: flex;
    align-items: center;
    gap: 3px;
    height: 22px;
    background-color: #ececec;
}

.command-tools {
    display: flex;
    align-items: center;
    justify-content: space-between;
    width: 46px;
    height: 22px;
    padding: 0 5px 0 4px;
    background: linear-gradient(#7d7d7d, #555);
}

.prompt {
    flex: 1;
    position: relative;
}

.command-input {
    width: 100%;
    padding: 0;
    border: 0;
    background: none;
    color: #222;
    font: 11px "Noto Sans", sans-serif;
}

.caret {
    position: absolute;
    left: 7px;
    top: 2px;
    width: 1px;
    height: 12px;
    background-color: #222;
}

.pointer {
    position: absolute;
    left: 337px;
    bottom: 5px;
}

/* Status bar */
.status-bar {
    display: flex;
    justify-content: space-between;
    height: 20px;
    background-color: #414141;
}

.layout-tabs {
    display: flex;
    gap: 2px;
    height: 16px;
    padding-left: 4px;
}

.layout-tabs a,
.layout-tabs button {
    padding: 3px 9px 0;
    border-radius: 0 0 9px 9px;
    background-color: #5a5a5a;
    color: #aaa;
}

.layout-tabs .current {
    background-color: #757575;
    color: #fff;
}

.layout-tabs button {
    padding: 0 10px;
}

.status-tools {
    display: flex;
    align-items: center;
    gap: 5px;
    width: 451px;
    background-color: #535353;
}

.space {
    height: 20px;
    padding: 4px 2px 0;
    border: 1px solid #666;
    border-width: 0 1px;
}

.ortho {
    margin-left: 2px;
}

.end {
    margin-left: auto;
}

/* Site logo card */
.site-logo {
    position: absolute;
    right: 25px;
    bottom: 0;
    height: 156px;
    background-color: #fff;
}

.site-name {
    font-family: "Noto Sans CJK SC", sans-serif;
    font-weight: 900;
    font-style: italic;
    fill: #0a0a0a;
}

.site-url {
    font-family: "Noto Sans", sans-serif;
    font-weight: 600;
    font-style: italic;
    fill: #1a1a1a;
}
```
